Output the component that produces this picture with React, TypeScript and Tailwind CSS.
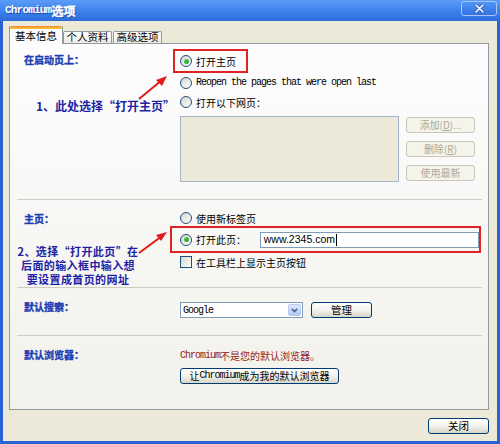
import React from "react";

// xp style bits
const Radio: React.FC<{ checked?: boolean }> = ({ checked }) => (
	<span className="flex size-[12px] shrink-0 items-center justify-center rounded-full border border-[#1c5180] bg-linear-to-br from-[#d6d5cf] to-white">
		{checked && <span className="size-[5px] rounded-full bg-linear-to-br from-[#5ad65a] to-[#1c951c]" />}
	</span>
);

const Check = () => <span className="size-[12px] shrink-0 border border-[#1c5180] bg-linear-to-br from-[#d6d5cf] to-white" />;

const Btn: React.FC<{ children: React.ReactNode; className?: string; disabled?: boolean }> = ({
	children,
	className = "",
	disabled,
}) => (
	<div
		className={`flex items-center justify-center rounded-[3px] border leading-none ${
			disabled
				? "border-[#c9c7ba] bg-[#f5f4ea] text-[#aca899]"
				: "border-[#003c74] bg-linear-to-b from-white via-[#f3f2ec] to-[#d8d5c8] text-black"
		} ${className}`}
	>
		{children}
	</div>
);

const Mono: React.FC<{ children: React.ReactNode }> = ({ children }) => (
	<span className="font-['Liberation_Mono',monospace] text-[10px] tracking-[-1px]">{children}</span>
);

const Label: React.FC<{ children: React.ReactNode }> = ({ children }) => (
	<div className="h-[14px] font-bold leading-[14px] text-[#1a3fb4] [-webkit-text-stroke:0.35px_#1a3fb4]">{children}</div>
);

export default function App() {
	return (
		<div className="relative flex h-[444px] w-[500px] flex-col bg-[#2a63d8] font-['Noto_Sans_CJK_SC',sans-serif] text-[10px] text-black">
			{/* title bar */}
			<div className="flex h-[21px] items-center justify-between bg-linear-to-b from-[#5b9cf6] via-[#3d84ec] to-[#2d6cd9] pl-[5px] pr-[3px]">
				<span className="flex items-center font-bold text-white [text-shadow:1px_1px_0_#1c4bb0]">
					<span className="font-['Liberation_Mono',monospace] text-[11px] tracking-[-0.8px]">Chromium</span>
					<span className="text-[12px] leading-none [-webkit-text-stroke:0.3px_white]">选项</span>
				</span>
				<div className="mt-px flex h-[15px] w-[36px] items-center justify-center self-start rounded-[3px] border border-[#a9c6f5] bg-linear-to-b from-[#5294f4] to-[#3373e0]">
					<svg width="11" height="9" viewBox="0 0 11 9">
						<path d="M2 1 L9 8 M9 1 L2 8" stroke="#2c5cb8" strokeWidth="3" strokeLinecap="round" />
						<path d="M2 1 L9 8 M9 1 L2 8" stroke="white" strokeWidth="1.6" strokeLinecap="round" />
					</svg>
				</div>
			</div>

			{/* body */}
			<div className="mx-[3px] mb-[3px] flex flex-1 flex-col bg-[#ece9d8] pl-[6px] pr-[8px]">
				{/* tabs */}
				<div className="flex h-[22px] items-end">
					<div className="relative z-10 -mb-px flex h-[18px] w-[54px] flex-col border-x border-[#919b9c] bg-[#fcfcfe]">
						<div className="h-[3px] rounded-t-[2px] bg-linear-to-b from-[#e68b2c] to-[#ffc73c]" />
						<div className="flex flex-1 items-center justify-center text-[10.5px] leading-none">基本信息</div>
					</div>
					<div className="flex h-[12px] w-[49px] items-center justify-center rounded-t-[2px] border-x border-t border-[#919b9c] bg-linear-to-b from-white to-[#ecebe5] text-[10.5px] leading-none">
						个人资料
					</div>
					<div className="ml-px flex h-[12px] w-[49px] items-center justify-center rounded-t-[2px] border-x border-t border-[#919b9c] bg-linear-to-b from-white to-[#ecebe5] text-[10.5px] leading-none">
						高级选项
					</div>
				</div>

				{/* panel */}
				<div className="flex h-[367px] flex-col border border-[#919b9c] bg-linear-to-b from-[#fdfdfe] to-[#f2f1eb]">
					{/* startup */}
					<div className="flex h-[155px]">
						<div className="w-[170px] shrink-0 pl-[14px] pt-[9px]">
							<Label>在启动页上：</Label>
							<div className="mt-[32px] h-[14px] whitespace-nowrap pl-[12px] text-[12px] font-bold leading-[14px] text-[#1f1fa6]">
								1、此处选择“打开主页”
							</div>
						</div>
						<div className="flex flex-1 flex-col pt-[5px]">
							<div className="-ml-[7px] flex h-[24px] w-[75px] items-center gap-[4px] border-2 border-[#e02424] pl-[5px]">
								<Radio checked />
								<span>打开主页</span>
							</div>
							<div className="flex h-[19px] items-center gap-[4px]">
								<Radio />
								<Mono>Reopen the pages that were open last</Mono>
							</div>
							<div className="flex h-[20px] items-center gap-[4px]">
								<Radio />
								<span>打开以下网页：</span>
							</div>
							<div className="mt-[4px] flex gap-[7px]">
								<div className="h-[66px] w-[219px] border border-[#a3b4c8] bg-[#ece9d8]" />
								<div className="mt-px flex flex-col gap-[8px]">
									<Btn disabled className="h-[16px] w-[69px]">
										添加(<span className="underline">D</span>)...
									</Btn>
									<Btn disabled className="h-[16px] w-[69px]">
										删除(<span className="underline">R</span>)
									</Btn>
									<Btn disabled className="h-[16px] w-[69px]">
										使用最新
									</Btn>
								</div>
							</div>
						</div>
					</div>

					<div className="ml-[7px] mr-[6px] h-px bg-[#cfcdc1]" />

					{/* home page */}
					<div className="flex h-[87px]">
						<div className="w-[170px] shrink-0 pl-[14px] pt-[12px]">
							<Label>主页：</Label>
							<div className="-ml-[12px] mt-[18px] flex w-[132px] flex-col items-center whitespace-nowrap text-[11px] font-bold leading-[14px] tracking-[0.4px] text-[#1f1fa6]">
								<span>2、选择“打开此页”在</span>
								<span>后面的输入框中输入想</span>
								<span>要设置成首页的网址</span>
							</div>
						</div>
						<div className="flex flex-1 flex-col pt-[10px]">
							<div className="flex h-[16px] items-center gap-[4px]">
								<Radio />
								<span>使用新标签页</span>
							</div>
							<div className="-ml-[10px] flex h-[27px] w-[311px] items-center gap-[4px] border-2 border-[#e02424] pl-[8px]">
								<Radio checked />
								<span className="w-[60px]">打开此页：</span>
								<div className="flex h-[16px] w-[220px] items-center border border-[#7f9db9] bg-white pl-[3px] font-['Liberation_Sans',sans-serif] text-[10.5px]">
									www.2345.com
									<span className="ml-px h-[12px] w-px bg-black" />
								</div>
							</div>
							<div className="flex h-[18px] items-center gap-[4px]">
								<Check />
								<span>在工具栏上显示主页按钮</span>
							</div>
						</div>
					</div>

					<div className="ml-[7px] mr-[6px] h-px bg-[#cfcdc1]" />

					{/* search */}
					<div className="flex h-[47px]">
						<div className="w-[170px] shrink-0 pl-[14px] pt-[12px]">
							<Label>默认搜索：</Label>
						</div>
						<div className="flex flex-1 items-start gap-[8px] pt-[14px]">
							<div className="flex h-[16px] w-[123px] border border-[#7f9db9] bg-white">
								<span className="flex flex-1 items-center pl-[2px]">
									<Mono>Google</Mono>
								</span>
								<span className="m-px flex w-[13px] items-center justify-center rounded-[2px] border border-[#b9cbf3] bg-linear-to-b from-[#dfe9fe] to-[#b3c8f5]">
									<svg width="7" height="5" viewBox="0 0 7 5">
										<path d="M0.8 0.8 L3.5 3.6 L6.2 0.8" fill="none" stroke="#4d6185" strokeWidth="1.6" />
									</svg>
								</span>
							</div>
							<Btn className="h-[16px] w-[61px] text-[10.5px]">管理</Btn>
						</div>
					</div>

					<div className="ml-[7px] mr-[6px] h-px bg-[#cfcdc1]" />

					{/* default browser */}
					<div className="flex flex-1">
						<div className="w-[170px] shrink-0 pl-[14px] pt-[12px]">
							<Label>默认浏览器：</Label>
						</div>
						<div className="flex flex-1 flex-col items-start pt-[12px]">
							<div className="flex h-[14px] items-center text-[#931c1c]">
								<Mono>Chromium</Mono>
								<span>不是您的默认浏览器。</span>
							</div>
							<Btn className="mt-[6px] h-[16px] w-[159px]">
								让<Mono>Chromium</Mono>成为我的默认浏览器
							</Btn>
						</div>
					</div>
				</div>

				{/* footer */}
				<div className="flex justify-end pt-[8px]">
					<Btn className="h-[16px] w-[61px] text-[10.5px]">关闭</Btn>
				</div>
			</div>

			{/* annotation arrows */}
			<svg className="pointer-events-none absolute left-0 top-0" width="500" height="444">
				<line x1="139" y1="99" x2="162" y2="80" stroke="#e01c1c" strokeWidth="2" />
				<polygon points="167,76 156,80 162,86" fill="#e01c1c" />
				<line x1="139" y1="253" x2="162" y2="236" stroke="#e01c1c" strokeWidth="2" />
				<polygon points="167,232 156,235 161,241" fill="#e01c1c" />
			</svg>
		</div>
	);
}
